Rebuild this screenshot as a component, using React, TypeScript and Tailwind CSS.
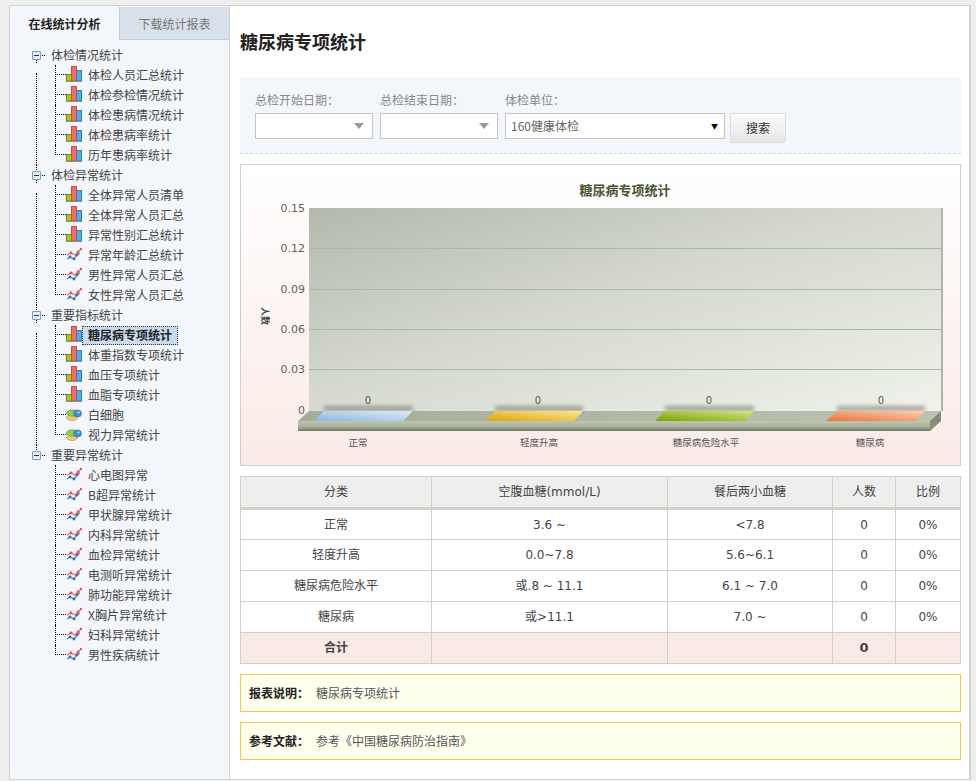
import React from 'react';

const FONT = '"Noto Sans CJK SC","Liberation Sans",sans-serif';

const BarIcon = () => (
  <svg width="16" height="16" viewBox="0 0 16 16" className="-mt-[2px] shrink-0">
    <rect x="0" y="15" width="16" height="1" fill="#a8a8a8" />
    <rect x="0.5" y="8.5" width="5" height="6.5" fill="#a2d010" stroke="#6f8c18" />
    <rect x="5.5" y="0.5" width="5" height="14.5" fill="#f46e60" stroke="#c85040" />
    <rect x="10.5" y="4.5" width="5" height="10.5" fill="#52ace8" stroke="#3a7eb8" />
  </svg>
);

const LineIcon = () => (
  <svg width="16" height="16" viewBox="0 0 16 16" className="-mt-[2px] shrink-0">
    <polyline points="1,9 5,7 9,9 12,6 15,3" fill="none" stroke="#ee6a64" strokeWidth="1.2" />
    <polyline points="1,13 4,11 8,13 11,9 14,7" fill="none" stroke="#5a86c4" strokeWidth="1.2" />
    <circle cx="5" cy="7" r="1.4" fill="#e8504a" />
    <circle cx="12" cy="6" r="1.4" fill="#e8504a" />
    <circle cx="15" cy="3" r="1.2" fill="#e8504a" />
    <circle cx="4" cy="11" r="1.4" fill="#3a6eb0" />
    <circle cx="8" cy="13" r="1.4" fill="#3a6eb0" />
    <circle cx="11" cy="9" r="1.4" fill="#3a6eb0" />
  </svg>
);

const PillIcon = () => (
  <svg width="16" height="16" viewBox="0 0 16 16" className="-mt-[2px] shrink-0">
    <ellipse cx="6" cy="11.5" rx="5.5" ry="3" fill="#ecca72" stroke="#b09040" strokeWidth="0.6" />
    <ellipse cx="6.5" cy="7" rx="6" ry="3.2" fill="#90cc58" stroke="#5f9a30" strokeWidth="0.6" />
    <ellipse cx="11.5" cy="7.5" rx="4" ry="3.6" fill="#3f8fd8" stroke="#2a6aa8" strokeWidth="0.6" />
    <ellipse cx="12.5" cy="6.5" rx="1.5" ry="1" fill="#a8d4f4" />
  </svg>
);

const icons = { bar: BarIcon, line: LineIcon, pill: PillIcon };
type IconName = keyof typeof icons;

const tree: { name: string; items: [string, IconName][] }[] = [
  {
    name: '体检情况统计',
    items: [
      ['体检人员汇总统计', 'bar'],
      ['体检参检情况统计', 'bar'],
      ['体检患病情况统计', 'bar'],
      ['体检患病率统计', 'bar'],
      ['历年患病率统计', 'bar'],
    ],
  },
  {
    name: '体检异常统计',
    items: [
      ['全体异常人员清单', 'bar'],
      ['全体异常人员汇总', 'bar'],
      ['异常性别汇总统计', 'bar'],
      ['异常年龄汇总统计', 'line'],
      ['男性异常人员汇总', 'line'],
      ['女性异常人员汇总', 'line'],
    ],
  },
  {
    name: '重要指标统计',
    items: [
      ['糖尿病专项统计', 'bar'],
      ['体重指数专项统计', 'bar'],
      ['血压专项统计', 'bar'],
      ['血脂专项统计', 'bar'],
      ['白细胞', 'pill'],
      ['视力异常统计', 'pill'],
    ],
  },
  {
    name: '重要异常统计',
    items: [
      ['心电图异常', 'line'],
      ['B超异常统计', 'line'],
      ['甲状腺异常统计', 'line'],
      ['内科异常统计', 'line'],
      ['血检异常统计', 'line'],
      ['电测听异常统计', 'line'],
      ['肺功能异常统计', 'line'],
      ['X胸片异常统计', 'line'],
      ['妇科异常统计', 'line'],
      ['男性疾病统计', 'line'],
    ],
  },
];

const rows = [
  ['正常', '3.6 ~', '<7.8'],
  ['轻度升高', '0.0~7.8', '5.6~6.1'],
  ['糖尿病危险水平', '或.8 ~ 11.1', '6.1 ~ 7.0'],
  ['糖尿病', '或>11.1', '7.0 ~'],
];

const Caret = () => (
  <svg width="10" height="6" viewBox="0 0 10 6">
    <path d="M0 0h10L5 6z" fill="#999" />
  </svg>
);

const Sidebar = () => (
  <aside className="w-[220px] shrink-0 border-r border-[#d2d2d2] bg-[#f3f6fa] pt-px">
    <div className="flex h-[33px] text-[12px]">
      <div className="flex w-[109px] items-center justify-center pt-px font-bold text-[#222]">在线统计分析</div>
      <div className="flex w-[110px] items-center justify-center border-b border-l border-[#c8ced4] bg-[#d8e1ea] pt-px text-[#777]">
        下载统计报表
      </div>
    </div>
    <div className="pt-[5px] text-[12px] text-[#444]">
      {tree.map((group, g) => (
        <div key={group.name}>
          <div className="relative flex h-5 items-center pl-[22px]">
            {g > 0 && <span className="absolute left-[26px] top-0 h-[5px] border-l border-dotted border-black" />}
            <span className="relative flex h-[9px] w-[9px] items-center justify-center rounded-[1px] border border-[#7c9cc0] bg-[#e4edf6]">
              <span className="h-px w-[5px] bg-[#333]" />
            </span>
            <span className="mx-[1px] w-[3px] border-t border-dotted border-black" />
            <span className="ml-[1px] pl-[4px]">{group.name}</span>
            {g < tree.length - 1 && (
              <span className="absolute left-[26px] top-[15px] h-[3px] border-l border-dotted border-black" />
            )}
          </div>
          <div className="relative pl-[45px]">
            {g < tree.length - 1 && (
              <span className="absolute bottom-0 left-[26px] top-[8px] border-l border-dotted border-black" />
            )}
            {group.items.map(([label, icon], i) => {
              const Icon = icons[icon];
              const last = i === group.items.length - 1;
              const active = label === '糖尿病专项统计';
              return (
                <div key={label} className="relative flex h-5 items-center">
                  <span
                    className={
                      last
                        ? 'absolute left-0 top-0 h-[10px] border-l border-dotted border-black'
                        : 'absolute left-0 top-0 h-5 border-l border-dotted border-black'
                    }
                  />
                  <span className="-mt-px w-[11px] shrink-0 border-t border-dotted border-black" />
                  <Icon />
                  {active ? (
                    <span className="flex h-[19px] items-center border border-dotted border-[#333] bg-[#c9dcee] pl-[5px] pr-[5px] font-bold text-[#222]">
                      {label}
                    </span>
                  ) : (
                    <span className="pl-[6px]">{label}</span>
                  )}
                </div>
              );
            })}
          </div>
        </div>
      ))}
    </div>
  </aside>
);

const bars = [
  { pts: '314,421 324,411 413,411 403,421', shadow: '324,406 413,406 413,411 324,411', fill: 'url(#blue)', v: 368, l: 358, label: '正常' },
  { pts: '485,421 495,411 583,411 574,421', shadow: '495,406 583,406 583,411 495,411', fill: 'url(#yellow)', v: 538, l: 539, label: '轻度升高' },
  { pts: '655,421 665,411 754,411 745,421', shadow: '665,406 754,406 754,411 665,411', fill: 'url(#green)', v: 709, l: 706, label: '糖尿病危险水平' },
  { pts: '826,421 837,411 925,411 916,421', shadow: '837,406 925,406 925,411 837,411', fill: 'url(#orange)', v: 881, l: 870, label: '糖尿病' },
];

const ticks: [string, number][] = [
  ['0.15', 208],
  ['0.12', 248],
  ['0.09', 289],
  ['0.06', 329],
  ['0.03', 369],
  ['0', 410],
];

const Chart = () => (
  <div className="mt-[10px] h-[302px] border border-[#cfcfcf] bg-gradient-to-b from-white to-[#faeae6]">
    <svg width="718" height="300" viewBox="241 165 718 300" className="block">
      <defs>
        <linearGradient id="wall" x1="0" y1="0" x2="1" y2="1">
          <stop offset="0" stopColor="#b4b9ae" />
          <stop offset="0.45" stopColor="#d4d8cd" />
          <stop offset="1" stopColor="#f0f3eb" />
        </linearGradient>
        <linearGradient id="front" x1="0" y1="0" x2="0" y2="1">
          <stop offset="0" stopColor="#bcc6b0" />
          <stop offset="0.55" stopColor="#a8b19b" />
          <stop offset="1" stopColor="#6f7964" />
        </linearGradient>
        <linearGradient id="floor" x1="0" y1="0" x2="1" y2="0">
          <stop offset="0" stopColor="#a5ac9a" />
          <stop offset="1" stopColor="#bcc3b2" />
        </linearGradient>
        <linearGradient id="blue" x1="0" y1="1" x2="1" y2="0">
          <stop offset="0" stopColor="#8fb4dc" />
          <stop offset="1" stopColor="#dcecf8" />
        </linearGradient>
        <linearGradient id="yellow" x1="0" y1="1" x2="1" y2="0">
          <stop offset="0" stopColor="#dba40c" />
          <stop offset="1" stopColor="#ffe596" />
        </linearGradient>
        <linearGradient id="green" x1="0" y1="1" x2="1" y2="0">
          <stop offset="0" stopColor="#7da200" />
          <stop offset="1" stopColor="#d2e68c" />
        </linearGradient>
        <linearGradient id="orange" x1="0" y1="1" x2="1" y2="0">
          <stop offset="0" stopColor="#e8733c" />
          <stop offset="1" stopColor="#fcd0b0" />
        </linearGradient>
        <filter id="soft" x="-10%" y="-150%" width="120%" height="400%">
          <feGaussianBlur stdDeviation="2" />
        </filter>
      </defs>

      <rect x="309" y="208" width="634" height="203" fill="url(#wall)" />
      <rect x="941" y="208" width="2" height="203" fill="#b0b5a8" />
      {[248, 289, 329, 369].map((y) => (
        <line key={y} x1="309" x2="941" y1={y + 0.5} y2={y + 0.5} stroke="#afb99c" />
      ))}

      <polygon points="298,421 309,411 941,411 930,421" fill="url(#floor)" />
      <rect x="298" y="421" width="632" height="10" fill="url(#front)" />
      <polygon points="930,421 941,411 941,421 930,431" fill="#858e7a" />

      {bars.map((b) => (
        <g key={b.label}>
          <polygon points={b.shadow} fill="#6f7068" opacity="0.6" filter="url(#soft)" />
          <polygon points={b.pts} fill={b.fill} />
          <text x={b.v} y={404} textAnchor="middle" fontSize="10" fill="#555e48" fontFamily='"DejaVu Sans",sans-serif'>
            0
          </text>
          <text x={b.l} y={446} textAnchor="middle" fontSize="9.5" fill="#555" fontFamily={FONT}>
            {b.label}
          </text>
        </g>
      ))}

      {ticks.map(([t, y]) => (
        <text key={t} x="305" y={y + 3.5} textAnchor="end" fontSize="11" fill="#5c6450" fontFamily='"DejaVu Sans",sans-serif'>
          {t}
        </text>
      ))}
      <text x="625" y="195" textAnchor="middle" fontSize="13" fontWeight="700" fill="#4a5433" fontFamily={FONT}>
        糖尿病专项统计
      </text>
      <text
        x="0"
        y="0"
        transform="translate(262 316) rotate(90)"
        textAnchor="middle"
        fontSize="9"
        fontWeight="700"
        fill="#3f4630"
        fontFamily={FONT}
      >
        人数
      </text>
    </svg>
  </div>
);

const Note = ({ title, text }: { title: string; text: string }) => (
  <div className="mt-[10px] flex h-[38px] items-center border border-[#f5c84a] bg-[#ffffee] pl-2 text-[12px]">
    <span className="w-[67px] font-bold text-[#222]">{title}</span>
    <span className="text-[#555]">{text}</span>
  </div>
);

const th = 'border border-[#d4d0c8] border-b-[3px] bg-[#eeeeee] font-normal text-[#444]';
const td = 'border border-[#d4d0c8] text-[#444]';

export default function App() {
  return (
    <div className="h-[781px] overflow-hidden bg-[#eeeeee] pl-[9px] pr-[5px] pt-[5px]" style={{ fontFamily: FONT }}>
      <div className="flex h-[775px] border border-[#d2d2d2] border-r-2 bg-white">
        <Sidebar />
        <main className="flex-1 pl-[10px] pr-[9px]">
          <h1 className="flex h-[71px] items-center pb-px text-[18px] font-bold text-[#222]">糖尿病专项统计</h1>

          <div className="h-[77px] border-b border-dashed border-[#d6d6d6] bg-[#f3f6fa] pl-[15px] pt-[14px] text-[12px]">
            <div className="flex gap-[7px] text-[#888]">
              <span className="w-[118px]">总检开始日期：</span>
              <span className="w-[118px]">总检结束日期：</span>
              <span>体检单位：</span>
            </div>
            <div className="mt-[4px] flex items-start gap-[7px]">
              <div className="flex h-[26px] w-[118px] items-center justify-end border border-[#c4c4c4] bg-white pr-[8px]">
                <Caret />
              </div>
              <div className="flex h-[26px] w-[118px] items-center justify-end border border-[#c4c4c4] bg-white pr-[8px]">
                <Caret />
              </div>
              <div className="flex h-[26px] w-[220px] items-center justify-between border border-[#c4c4c4] bg-white pl-[5px] pr-[6px] text-[#666]">
                <span>160健康体检</span>
                <span className="text-[7px] text-black">▼</span>
              </div>
              <button className="-ml-[2px] h-[30px] w-[56px] rounded-[2px] border border-[#dddddd] bg-gradient-to-b from-[#fbfbfb] to-[#e6e6e6] text-[12px] text-[#333]">
                搜索
              </button>
            </div>
          </div>

          <Chart />

          <table className="mt-[10px] w-[720px] table-fixed border-collapse text-center font-['DejaVu_Sans','Noto_Sans_CJK_SC',sans-serif] text-[12px]">
            <colgroup>
              <col className="w-[191px]" />
              <col className="w-[236px]" />
              <col className="w-[165px]" />
              <col className="w-[63px]" />
              <col className="w-[65px]" />
            </colgroup>
            <thead>
              <tr className="h-[32px]">
                <th className={th}>分类</th>
                <th className={th}>空腹血糖(mmol/L)</th>
                <th className={th}>餐后两小血糖</th>
                <th className={th}>人数</th>
                <th className={th}>比例</th>
              </tr>
            </thead>
            <tbody>
              {rows.map((r) => (
                <tr key={r[0]} className="h-[31px]">
                  <td className={td}>{r[0]}</td>
                  <td className={td}>{r[1]}</td>
                  <td className={td}>{r[2]}</td>
                  <td className={td}>0</td>
                  <td className={td}>0%</td>
                </tr>
              ))}
              <tr className="h-[31px] bg-[#faeae6] font-bold">
                <td className={td}>合计</td>
                <td className={td} />
                <td className={td} />
                <td className={td + ' text-[13px]'}>0</td>
                <td className={td} />
              </tr>
            </tbody>
          </table>

          <Note title="报表说明：" text="糖尿病专项统计" />
          <Note title="参考文献：" text="参考《中国糖尿病防治指南》" />
        </main>
      </div>
    </div>
  );
}
